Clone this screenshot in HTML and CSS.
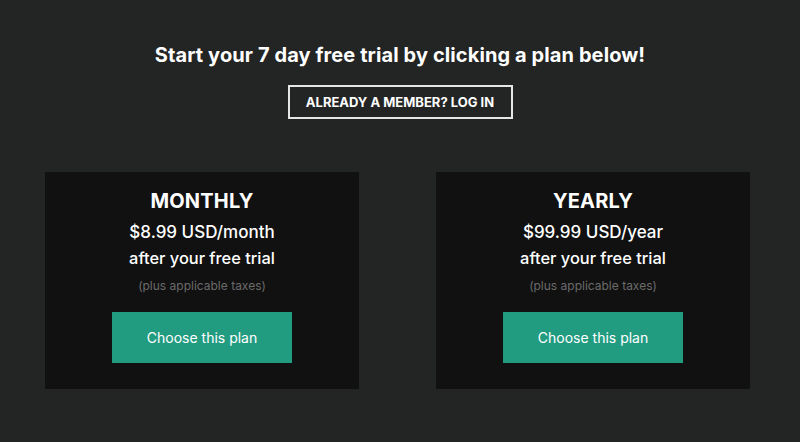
FILE: index.html
```html
<!DOCTYPE html>
<html>
<head>
<meta charset="utf-8">
<link rel="stylesheet" href="styles.css">
</head>
<body>
<div class="page">
  <h1 class="title">Start your 7 day free trial by clicking a plan below!</h1>
  <a class="login">ALREADY A MEMBER? LOG IN</a>
  <div class="plans">
    <div class="card">
      <div class="plan-name">MONTHLY</div>
      <div class="price">$8.99 USD/month</div>
      <div class="after">after your free trial</div>
      <div class="taxes">(plus applicable taxes)</div>
      <a class="choose">Choose this plan</a>
    </div>
    <div class="card">
      <div class="plan-name">YEARLY</div>
      <div class="price">$99.99 USD/year</div>
      <div class="after">after your free trial</div>
      <div class="taxes">(plus applicable taxes)</div>
      <a class="choose">Choose this plan</a>
    </div>
  </div>
</div>
</body>
</html>
```
FILE: styles.css
```css
html, body {
  margin: 0;
  padding: 0;
}
body {
  background: #232524;
  font-family: Inter, "Liberation Sans", sans-serif;
  color: #fff;
  width: 800px;
  height: 442px;
  overflow: hidden;
}
.page {
  display: flex;
  flex-direction: column;
  align-items: center;
  padding-top: 42px;
}
.title {
  margin: 0;
  font-size: 20px;
  font-weight: 700;
  line-height: 26px;
  letter-spacing: 0.1px;
  color: #fff;
}
.login {
  margin-top: 17px;
  width: 221px;
  height: 30px;
  border: 2px solid #e6e6e6;
  display: flex;
  align-items: center;
  justify-content: center;
  font-size: 13px;
  font-weight: 700;
  color: #fff;
}
.plans {
  margin-top: 53px;
  align-self: stretch;
  display: flex;
  gap: 77px;
  padding-left: 45px;
}
.card {
  width: 314px;
  height: 217px;
  background: #111111;
  display: flex;
  flex-direction: column;
  align-items: center;
  box-sizing: border-box;
  padding-top: 16px;
}
.plan-name {
  font-size: 20px;
  font-weight: 700;
  line-height: 26px;
  letter-spacing: 0.2px;
}
.price {
  margin-top: 6px;
  font-size: 17px;
  font-weight: 500;
  line-height: 24px;
}
.after {
  margin-top: 2px;
  font-size: 16.4px;
  font-weight: 500;
  line-height: 24px;
}
.taxes {
  margin-top: 7px;
  font-size: 12px;
  color: #6b6b6b;
  line-height: 18px;
}
.choose {
  margin-top: 17px;
  width: 180px;
  height: 51px;
  background: #229c81;
  display: flex;
  align-items: center;
  justify-content: center;
  font-size: 14px;
  color: #fff;
}
```
